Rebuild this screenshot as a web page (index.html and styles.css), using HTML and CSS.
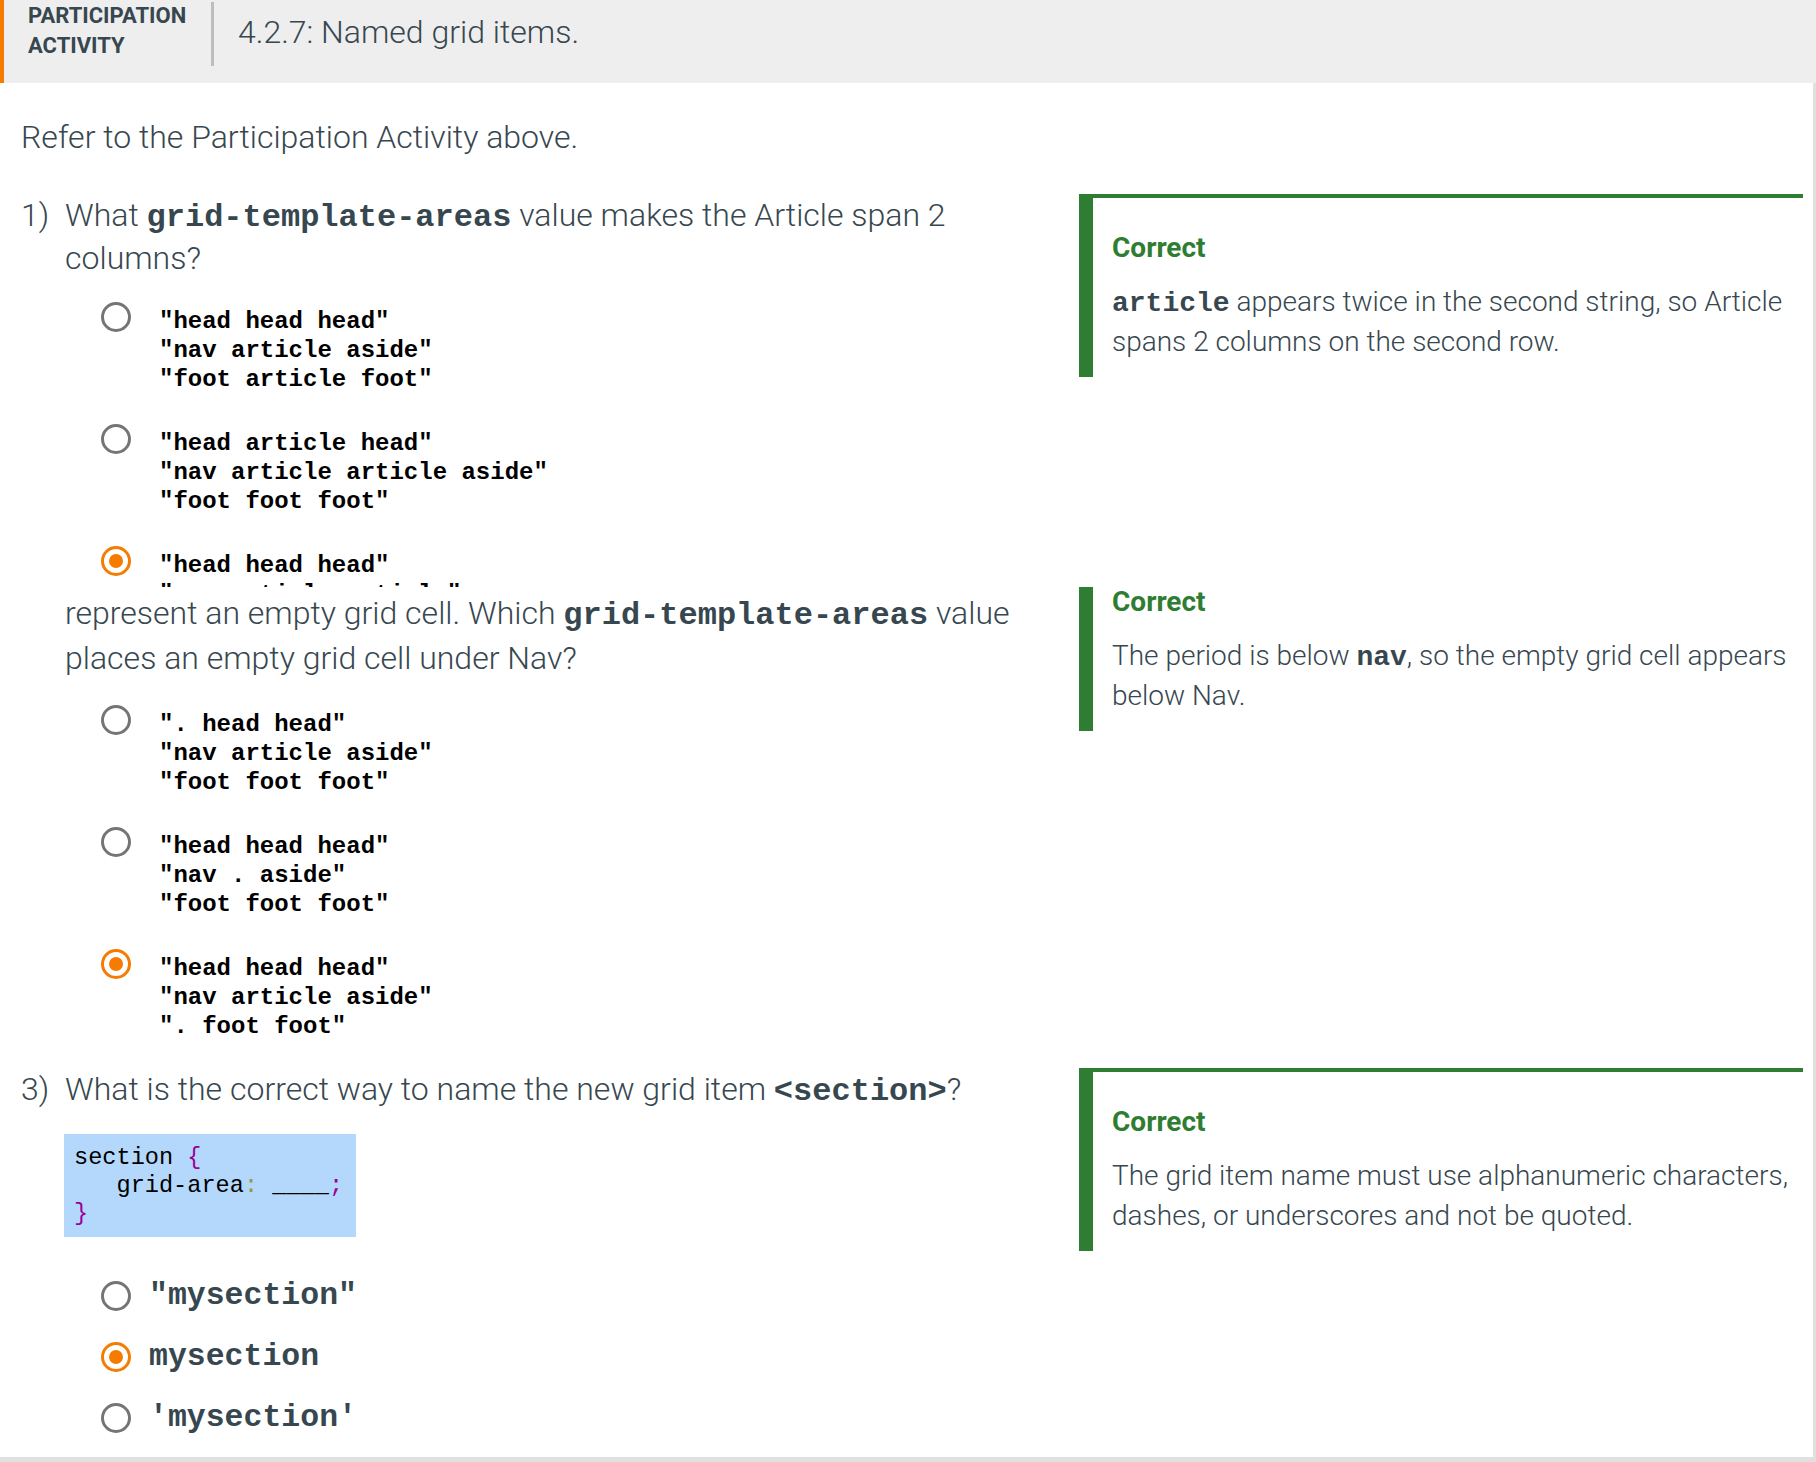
FILE: index.html
```html
<!DOCTYPE html>
<html lang="en">
<head>
<meta charset="utf-8">
<title>4.2.7: Named grid items.</title>
<link rel="stylesheet" href="styles.css">
</head>
<body>
<div class="page">
  <header class="pa-header">
    <div class="pa-label">PARTICIPATION<br>ACTIVITY</div>
    <div class="pa-sep"></div>
    <h1 class="pa-title">4.2.7: Named grid items.</h1>
  </header>
  <main class="content">
    <p class="intro">Refer to the Participation Activity above.</p>

    <section class="q-row q-row--first">
      <div class="q-main">
        <div class="q-text"><span class="q-num">1)</span><span class="q-body">What <code class="ic">grid-template-areas</code> value makes the Article span 2 columns?</span></div>
        <ul class="opts">
          <li class="opt"><span class="radio"></span><pre class="opt-code">"head head head"
"nav article aside"
"foot article foot"</pre></li>
          <li class="opt"><span class="radio"></span><pre class="opt-code">"head article head"
"nav article article aside"
"foot foot foot"</pre></li>
          <li class="opt"><span class="radio radio--on"></span><pre class="opt-code">"head head head"
"nav article article"
"foot foot foot"</pre></li>
        </ul>
      </div>
      <aside class="fb">
        <div class="fb-title">Correct</div>
        <p class="fb-text"><code class="fc">article</code> appears twice in the second string, so Article spans 2 columns on the second row.</p>
      </aside>
    </section>

    <section class="q-row q-row--cont">
      <div class="q-main">
        <div class="q-text"><span class="q-num"></span><span class="q-body">represent an empty grid cell. Which <code class="ic">grid-template-areas</code> value places an empty grid cell under Nav?</span></div>
        <ul class="opts opts--q2">
          <li class="opt"><span class="radio"></span><pre class="opt-code">". head head"
"nav article aside"
"foot foot foot"</pre></li>
          <li class="opt"><span class="radio"></span><pre class="opt-code">"head head head"
"nav . aside"
"foot foot foot"</pre></li>
          <li class="opt"><span class="radio radio--on"></span><pre class="opt-code">"head head head"
"nav article aside"
". foot foot"</pre></li>
        </ul>
      </div>
      <aside class="fb fb--cut">
        <div class="fb-title">Correct</div>
        <p class="fb-text">The period is below <code class="fc">nav</code>, so the empty grid cell appears below Nav.</p>
      </aside>
    </section>

    <section class="q-row q-row--last">
      <div class="q-main">
        <div class="q-text"><span class="q-num">3)</span><span class="q-body">What is the correct way to name the new grid item <code class="ic">&lt;section&gt;</code>?</span></div>
        <pre class="code-block">section <span class="tk-brace">{</span>
   grid-area<span class="tk-colon">:</span> ____<span class="tk-brace">;</span>
<span class="tk-brace">}</span></pre>
        <ul class="opts-lg">
          <li class="opt-lg"><span class="radio"></span><span class="opt-lg-text">"mysection"</span></li>
          <li class="opt-lg"><span class="radio radio--on"></span><span class="opt-lg-text">mysection</span></li>
          <li class="opt-lg"><span class="radio"></span><span class="opt-lg-text">'mysection'</span></li>
        </ul>
      </div>
      <aside class="fb">
        <div class="fb-title">Correct</div>
        <p class="fb-text">The grid item name must use alphanumeric characters, dashes, or underscores and not be quoted.</p>
      </aside>
    </section>
  </main>
</div>
</body>
</html>
```

FILE: styles.css
```css
* { box-sizing: border-box; }

html, body {
  margin: 0;
  padding: 0;
  background: #ffffff;
}

body {
  font-family: Roboto, "Liberation Sans", sans-serif;
  color: #37474f;
}

.page {
  width: 1816px;
  height: 1462px;
  overflow: hidden;
}

/* Header */
.pa-header {
  display: flex;
  align-items: flex-start;
  height: 83px;
  background: #eeeeee;
  border-left: 4px solid #f57c00;
}

.pa-label {
  flex-shrink: 0;
  width: 183px;
  margin: 1px 0 0 24px;
  font-weight: 700;
  font-size: 22px;
  line-height: 30px;
  color: #37474f;
}

.pa-sep {
  flex-shrink: 0;
  width: 3px;
  height: 64px;
  margin-top: 2px;
  background: #bdbdbd;
}

.pa-title {
  margin: 0 0 0 24px;
  font-family: "Roboto Light", Roboto, sans-serif;
  font-weight: 300;
  font-size: 32px;
  line-height: 64px;
  color: #37474f;
}

/* Content */
.content {
  height: 1379px;
  padding: 33px 10px 0 21px;
  border-right: 3px solid #e0e0e0;
  border-bottom: 5px solid #e0e0e0;
}

.intro {
  margin: 0 0 36px;
  font-family: "Roboto Light", Roboto, sans-serif;
  font-weight: 300;
  font-size: 32px;
  line-height: 42px;
}

.q-row {
  display: grid;
  grid-template-columns: 1fr 724px;
  column-gap: 40px;
  align-items: start;
}

.q-row--first {
  height: 393px;
  overflow: hidden;
}

.q-row--cont {
  overflow: hidden;
}

.q-row--cont .q-main {
  padding-top: 4px;
}

.q-row--last {
  margin-top: 27px;
}

.q-text {
  display: flex;
  font-family: "Roboto Light", Roboto, sans-serif;
  font-weight: 300;
  font-size: 32px;
  line-height: 43px;
}

.q-row--cont .q-text {
  line-height: 45px;
}

.q-num {
  flex-shrink: 0;
  width: 44px;
}

.ic {
  font-family: "Liberation Mono", monospace;
  font-weight: 700;
  font-size: 32px;
  line-height: 1;
  color: #37474f;
}

/* Options with multi-line code */
.opts {
  list-style: none;
  margin: 22px 0 0 80px;
  padding: 0;
}

.opts--q2 {
  margin-top: 24px;
}

.opt {
  display: flex;
  align-items: flex-start;
  margin-bottom: 30px;
}

.opt:last-child {
  margin-bottom: 0;
}

.opt-code {
  margin: 0 0 0 28px;
  padding-top: 5px;
  font-family: "Liberation Mono", monospace;
  font-weight: 700;
  font-size: 24px;
  line-height: 29px;
  color: #000000;
}

/* Radios */
.radio {
  flex-shrink: 0;
  display: flex;
  align-items: center;
  justify-content: center;
  width: 30px;
  height: 30px;
  border: 3px solid #757575;
  border-radius: 50%;
  background: #ffffff;
}

.radio--on {
  border-color: #f57c00;
}

.radio--on::after {
  content: "";
  width: 14px;
  height: 14px;
  border-radius: 50%;
  background: #f57c00;
}

/* Code block */
.code-block {
  width: fit-content;
  margin: 23px 0 0 43px;
  padding: 10px 13px 9px 10px;
  background: #b4d8fb;
  font-family: "Liberation Mono", monospace;
  font-size: 23.6px;
  line-height: 28px;
  color: #000000;
}

.tk-brace { color: #990099; }
.tk-colon { color: #999933; }

/* Large single-line options */
.opts-lg {
  list-style: none;
  margin: 28px 0 0 80px;
  padding: 0;
}

.opt-lg {
  display: flex;
  align-items: center;
  height: 61px;
}

.opt-lg-text {
  margin-left: 18px;
  font-family: "Liberation Mono", monospace;
  font-weight: 700;
  font-size: 31.5px;
  color: #37474f;
}

/* Feedback */
.fb {
  border-left: 14px solid #2e7d32;
  border-top: 4px solid #2e7d32;
  padding: 32px 2px 15px 19px;
}

.fb--cut {
  border-top: 0;
  padding-top: 0;
}

.fb--cut .fb-title {
  margin-top: -3px;
}

.fb-title {
  font-weight: 700;
  font-size: 28px;
  line-height: 36px;
  color: #2e7d32;
}

.fb-text {
  margin: 16px 0 0;
  font-family: "Roboto Light", Roboto, sans-serif;
  font-weight: 300;
  font-size: 28px;
  line-height: 40px;
  color: #37474f;
}

.fc {
  font-family: "Liberation Mono", monospace;
  font-weight: 700;
  font-size: 28px;
  line-height: 1;
  color: #37474f;
}
```
